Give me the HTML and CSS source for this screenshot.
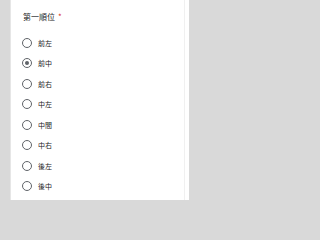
FILE: index.html
```html
<!DOCTYPE html>
<html lang="zh-Hant">
<head>
<meta charset="utf-8">
<link rel="stylesheet" href="styles.css">
</head>
<body>
<div class="card">
  <div class="inner">
    <div class="title">第一順位<span class="req">*</span></div>
    <div class="options">
      <div class="row"><span class="radio"></span><span class="label">前左</span></div>
      <div class="row"><span class="radio checked"></span><span class="label">前中</span></div>
      <div class="row"><span class="radio"></span><span class="label">前右</span></div>
      <div class="row"><span class="radio"></span><span class="label">中左</span></div>
      <div class="row"><span class="radio"></span><span class="label">中間</span></div>
      <div class="row"><span class="radio"></span><span class="label">中右</span></div>
      <div class="row"><span class="radio"></span><span class="label">後左</span></div>
      <div class="row"><span class="radio"></span><span class="label">後中</span></div>
    </div>
  </div>
</div>
</body>
</html>
```
FILE: styles.css
```css
html, body {
  margin: 0;
  padding: 0;
  background: #d9d9d9;
  height: 200px;
  overflow: hidden;
  font-family: "Noto Sans CJK TC", "Noto Sans", sans-serif;
}
.card {
  margin-left: 10px;
  width: 178px;
  height: 200px;
  background: #fff;
  border-left: 1px solid #e6e6e6;
}
.inner {
  width: 174px;
  height: 200px;
  border-right: 1px solid #f0f0f0;
  padding-left: 11px;
  padding-top: 12px;
  box-sizing: border-box;
  display: flex;
  flex-direction: column;
}
.title {
  font-size: 8px;
  line-height: 10px;
  color: #202124;
  padding-left: 1px;
}
.req {
  color: #d93025;
  margin-left: 3px;
}
.options {
  margin-top: 10.25px;
  display: flex;
  flex-direction: column;
}
.row {
  height: 20.5px;
  display: flex;
  align-items: center;
  gap: 6px;
}
.radio {
  width: 10px;
  height: 10px;
  box-sizing: border-box;
  border: 1px solid #5f6368;
  border-radius: 50%;
  display: flex;
  align-items: center;
  justify-content: center;
}
.radio.checked::after {
  content: "";
  width: 4px;
  height: 4px;
  border-radius: 50%;
  background: #5f6368;
}
.label {
  font-size: 7px;
  line-height: 8px;
  color: #202124;
}
```
